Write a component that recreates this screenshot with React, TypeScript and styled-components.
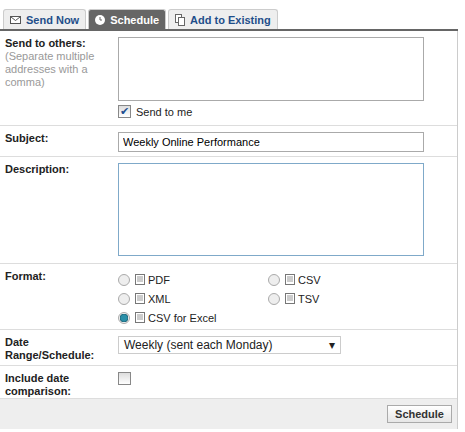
import styled, { createGlobalStyle } from "styled-components";

const Global = createGlobalStyle`
  body { margin: 0; background: #fff; font-family: Arial, "Liberation Sans", sans-serif; font-size: 11px; color: #222; }
`;

const Page = styled.div`
  width: 458px;
  padding-top: 9px;
`;

const Tabs = styled.div`
  display: flex;
  gap: 2px;
  padding-left: 3px;
  height: 20px;
  border-bottom: 2px solid #666;
`;

const Tab = styled.div<{ $active?: boolean }>`
  display: flex;
  align-items: center;
  gap: 5px;
  padding: 0 6px;
  font-weight: bold;
  font-size: 11px;
  border: 1px solid #ccc;
  border-bottom: none;
  border-radius: 3px 3px 0 0;
  background: ${({ $active }) => ($active ? "#666" : "#eee")};
  color: ${({ $active }) => ($active ? "#fff" : "#1f4e8a")};
`;

const Body = styled.div`
  border-right: 1px solid #ccc;
`;

const Row = styled.div<{ $h: number }>`
  display: grid;
  grid-template-columns: 118px 1fr;
  height: ${({ $h }) => $h}px;
  border-bottom: 1px solid #ddd;
  box-sizing: border-box;
  overflow: hidden;
`;

const Label = styled.div`
  padding: 6px 5px 0;
  font-weight: bold;
  line-height: 13px;
`;

const Hint = styled.div`
  font-weight: normal;
  color: #999;
`;

const Field = styled.div`
  padding-top: 6px;
  display: flex;
  flex-direction: column;
  gap: 4px;
`;

const Area = styled.textarea<{ $h: number; $blue?: boolean }>`
  width: 306px;
  height: ${({ $h }) => $h}px;
  box-sizing: border-box;
  border: 1px solid ${({ $blue }) => ($blue ? "#7fa9c9" : "#aaa")};
  resize: none;
`;

const Input = styled.input`
  width: 306px;
  height: 20px;
  box-sizing: border-box;
  border: 1px solid #aaa;
  font: 11px Arial, "Liberation Sans", sans-serif;
  padding: 0 4px;
`;

const Check = styled.span`
  display: inline-flex;
  align-items: center;
  justify-content: center;
  width: 11px;
  height: 11px;
  border: 1px solid #888;
  background: linear-gradient(#ddd, #fff);
  color: #1d4f91;
  font-size: 11px;
  line-height: 1;
`;

const CheckLine = styled.label`
  display: flex;
  align-items: center;
  gap: 5px;
  font-size: 11px;
`;

const Radios = styled.div`
  display: grid;
  grid-template-columns: 150px 150px;
  grid-auto-rows: 19px;
  align-items: center;
  padding-top: 0;
`;

const Radio = styled.label<{ $on?: boolean }>`
  display: flex;
  align-items: center;
  gap: 3px;
  &::before {
    content: "";
    width: 10px;
    height: 10px;
    border-radius: 50%;
    border: 1px solid #aaa;
    background: ${({ $on }) => ($on ? "radial-gradient(#2a8fa8 40%, #1b5f72 60%, #eee 62%)" : "#eee")};
    margin-right: 2px;
  }
`;

const FileIcon = () => (
  <svg width="10" height="11" viewBox="0 0 10 11">
    <rect x="0.5" y="0.5" width="9" height="10" fill="#fff" stroke="#777" />
    <path d="M2 3h6M2 5h6M2 7h6" stroke="#999" />
  </svg>
);

const Select = styled.div`
  width: 223px;
  height: 18px;
  box-sizing: border-box;
  border: 1px solid #ccc;
  display: flex;
  align-items: center;
  justify-content: space-between;
  padding: 0 5px;
  font-size: 12px;
  &::after { content: "▾"; font-size: 12px; }
`;

const Footer = styled.div`
  background: #eee;
  height: 30px;
  display: flex;
  align-items: center;
  justify-content: flex-end;
  padding-right: 5px;
`;

const Button = styled.button`
  font: bold 11px Arial, "Liberation Sans", sans-serif;
  color: #333;
  background: linear-gradient(#fff, #e6e6e6);
  border: 1px solid #aaa;
  height: 18px;
  width: 65px;
  padding: 0;
`;

export default function App() {
  return (
    <Page>
      <Global />
      <Tabs>
        <Tab>
          <svg width="11" height="8" viewBox="0 0 11 8"><rect x="0.5" y="0.5" width="10" height="7" fill="#fff" stroke="#555" /><path d="M1 1l4.5 3.5L10 1" fill="none" stroke="#555" /></svg>
          Send Now
        </Tab>
        <Tab $active>
          <svg width="10" height="10" viewBox="0 0 10 10"><circle cx="5" cy="5" r="5" fill="#fff" /><path d="M5 2v3h2" stroke="#666" fill="none" /></svg>
          Schedule
        </Tab>
        <Tab>
          <svg width="10" height="12" viewBox="0 0 10 12"><rect x="0.5" y="0.5" width="6" height="8" fill="#fff" stroke="#666" /><rect x="3.5" y="3.5" width="6" height="8" fill="#fff" stroke="#666" /></svg>
          Add to Existing
        </Tab>
      </Tabs>
      <Body>
        <Row $h={95}>
          <Label>Send to others:<Hint>(Separate multiple addresses with a comma)</Hint></Label>
          <Field>
            <Area $h={64} />
            <CheckLine><Check>✔</Check>Send to me</CheckLine>
          </Field>
        </Row>
        <Row $h={31}>
          <Label>Subject:</Label>
          <Field><Input defaultValue="Weekly Online Performance" /></Field>
        </Row>
        <Row $h={107}>
          <Label>Description:</Label>
          <Field><Area $h={93} $blue /></Field>
        </Row>
        <Row $h={66}>
          <Label>Format:</Label>
          <Field>
            <Radios>
              <Radio><FileIcon />PDF</Radio>
              <Radio><FileIcon />CSV</Radio>
              <Radio><FileIcon />XML</Radio>
              <Radio><FileIcon />TSV</Radio>
              <Radio $on><FileIcon />CSV for Excel</Radio>
            </Radios>
          </Field>
        </Row>
        <Row $h={36}>
          <Label>Date Range/Schedule:</Label>
          <Field><Select>Weekly (sent each Monday)</Select></Field>
        </Row>
        <Row $h={33}>
          <Label>Include date comparison:</Label>
          <Field><Check /></Field>
        </Row>
        <Footer><Button>Schedule</Button></Footer>
      </Body>
    </Page>
  );
}
